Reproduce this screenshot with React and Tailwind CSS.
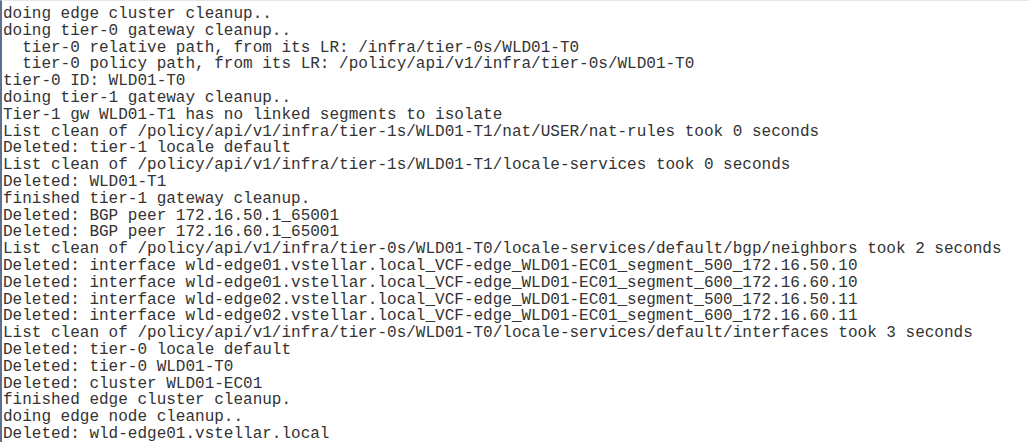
import React from 'react';

const lines = [
  'doing edge cluster cleanup..',
  'doing tier-0 gateway cleanup..',
  '  tier-0 relative path, from its LR: /infra/tier-0s/WLD01-T0',
  '  tier-0 policy path, from its LR: /policy/api/v1/infra/tier-0s/WLD01-T0',
  'tier-0 ID: WLD01-T0',
  'doing tier-1 gateway cleanup..',
  'Tier-1 gw WLD01-T1 has no linked segments to isolate',
  'List clean of /policy/api/v1/infra/tier-1s/WLD01-T1/nat/USER/nat-rules took 0 seconds',
  'Deleted: tier-1 locale default',
  'List clean of /policy/api/v1/infra/tier-1s/WLD01-T1/locale-services took 0 seconds',
  'Deleted: WLD01-T1',
  'finished tier-1 gateway cleanup.',
  'Deleted: BGP peer 172.16.50.1_65001',
  'Deleted: BGP peer 172.16.60.1_65001',
  'List clean of /policy/api/v1/infra/tier-0s/WLD01-T0/locale-services/default/bgp/neighbors took 2 seconds',
  'Deleted: interface wld-edge01.vstellar.local_VCF-edge_WLD01-EC01_segment_500_172.16.50.10',
  'Deleted: interface wld-edge01.vstellar.local_VCF-edge_WLD01-EC01_segment_600_172.16.60.10',
  'Deleted: interface wld-edge02.vstellar.local_VCF-edge_WLD01-EC01_segment_500_172.16.50.11',
  'Deleted: interface wld-edge02.vstellar.local_VCF-edge_WLD01-EC01_segment_600_172.16.60.11',
  'List clean of /policy/api/v1/infra/tier-0s/WLD01-T0/locale-services/default/interfaces took 3 seconds',
  'Deleted: tier-0 locale default',
  'Deleted: tier-0 WLD01-T0',
  'Deleted: cluster WLD01-EC01',
  'finished edge cluster cleanup.',
  'doing edge node cleanup..',
  'Deleted: wld-edge01.vstellar.local',
];

export default function App() {
  return (
    <div className="w-[1029px] h-[442px] overflow-hidden bg-white border-t border-t-[#e6e6e6] border-l-2 border-l-[#5d7090]">
      <pre className="pl-px pt-[5px] text-[16px] leading-[16.8px] text-[#333333] font-['Liberation_Mono','Courier_New',monospace] whitespace-pre">
        {lines.join('\n')}
      </pre>
    </div>
  );
}
